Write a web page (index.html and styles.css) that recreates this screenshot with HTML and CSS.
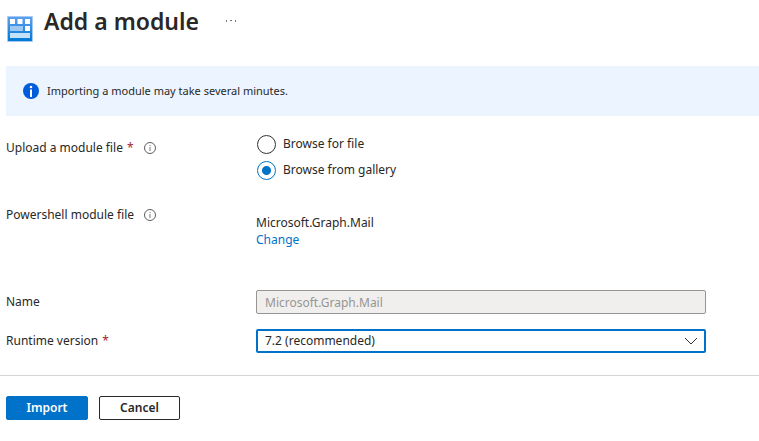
FILE: index.html
```html
<!DOCTYPE html>
<html lang="en">
<head>
<meta charset="utf-8">
<title>Add a module</title>
<link rel="stylesheet" href="styles.css">
</head>
<body>
<header class="header">
  <svg class="logo" viewBox="0 0 26 26" aria-hidden="true">
    <defs>
      <linearGradient id="tile" x1="0" y1="0" x2="0" y2="1">
        <stop offset="0" stop-color="#5ea0ef"/>
        <stop offset="1" stop-color="#0078d4"/>
      </linearGradient>
    </defs>
    <rect width="26" height="26" rx="1" fill="#a5cbf3"/>
    <rect x="1" y="1" width="24" height="24" fill="url(#tile)"/>
    <path fill="#fff" d="M3 3h5v5H3zM10.500 3h5v5h-5zM18 3h5v5h-5zM18 10h5v5h-5z"/>
    <path fill="#9cc8f2" d="M3 10h13v5H3z"/>
    <path fill="#c3e1f8" d="M3 17h20v5H3z"/>
  </svg>
  <h1 class="title">Add a module</h1>
  <button class="more" type="button" aria-label="More">
    <svg class="dots" viewBox="0 0 12 2" aria-hidden="true"><path fill="#797775" d="M1 0h1v2H1zM5 0h2v1H5zM10 0h1v2h-1z"/></svg>
  </button>
</header>

<div class="banner">
  <svg class="banner-icon" viewBox="0 0 16 16" aria-hidden="true">
    <circle cx="8" cy="8" r="8" fill="#015cda"/>
    <circle cx="8" cy="4" r="1.300" fill="#fff"/>
    <path fill="#fff" d="M7 6.500h2V14H7z"/>
  </svg>
  <span>Importing a module may take several minutes.</span>
</div>

<form class="form">
  <div class="row upload" role="radiogroup" aria-labelledby="upload-label">
    <div class="label">
      <span id="upload-label">Upload a module file <span class="required">*</span></span>
      <svg class="info" viewBox="0 0 12 12" aria-hidden="true"><circle cx="6" cy="6" r="5.500" fill="none" stroke="#605e5c"/><path fill="#797775" d="M5.500 3h1v1h-1zM5.500 5h1v4h-1z"/></svg>
    </div>
    <div class="field options">
      <label class="option"><input class="radio" type="radio" name="source">Browse for file</label>
      <label class="option"><input class="radio" type="radio" name="source" checked>Browse from gallery</label>
    </div>
  </div>

  <div class="row module">
    <div class="label">
      <span>Powershell module file</span>
      <svg class="info" viewBox="0 0 12 12" aria-hidden="true"><circle cx="6" cy="6" r="5.500" fill="none" stroke="#605e5c"/><path fill="#797775" d="M5.500 3h1v1h-1zM5.500 5h1v4h-1z"/></svg>
    </div>
    <div class="field module-value">
      <div>Microsoft.Graph.Mail</div>
      <a class="link" href="#">Change</a>
    </div>
  </div>

  <div class="row control-row">
    <label class="label" for="name">Name</label>
    <input class="field control" id="name" type="text" value="Microsoft.Graph.Mail" disabled>
  </div>

  <div class="row control-row">
    <label class="label" for="runtime"><span>Runtime version <span class="required">*</span></span></label>
    <div class="field select-box">
      <select class="control select" id="runtime"><option>7.2 (recommended)</option></select>
      <svg class="chevron" viewBox="0 0 14 8" aria-hidden="true"><path d="M1 1l6 6 6-6" fill="none" stroke="#323130"/></svg>
    </div>
  </div>

  <footer class="footer">
    <button class="button primary" type="button">Import</button>
    <button class="button" type="button">Cancel</button>
  </footer>
</form>
</body>
</html>
```
FILE: styles.css
```css
* {
  box-sizing: border-box;
}

body {
  margin: 0;
  background: #fff;
  color: #292827;
  font-family: "Noto Sans", "Open Sans", sans-serif;
  font-size: 12px;
  line-height: 18px;
}

.header {
  display: flex;
  align-items: flex-start;
  height: 66px;
  padding: 4px 7px;
}

.logo {
  width: 26px;
  height: 26px;
  margin-top: 12px;
}

.title {
  margin: 0 0 0 11px;
  font-size: 23px;
  font-weight: 600;
  line-height: 34px;
}

.more {
  display: flex;
  margin: 12px 0 0 22px;
  padding: 4px;
  border: 0;
  background: none;
}

.dots {
  width: 12px;
  height: 2px;
}

.banner {
  display: flex;
  align-items: center;
  gap: 8px;
  height: 50px;
  margin-left: 6px;
  padding: 0 17px;
  background: #ecf5ff;
  font-size: 11px;
}

.banner-icon {
  flex: none;
  width: 16px;
  height: 16px;
}

.row {
  display: grid;
  grid-template-columns: 250px minmax(0, 450px);
  padding: 0 6px;
}

.label {
  display: flex;
  align-items: center;
  align-self: start;
  gap: 10px;
}

.required {
  margin-left: 1px;
  color: #a4262c;
}

.info {
  width: 12px;
  height: 12px;
}

.upload {
  padding-top: 18px;
}

.upload .label {
  margin-top: 5px;
}

.options {
  display: grid;
  gap: 6px;
}

.option {
  display: flex;
  align-items: center;
  gap: 7px;
  height: 20px;
}

.radio {
  appearance: none;
  width: 19px;
  height: 19px;
  margin: 0 0 0 1px;
  border: 1px solid #323130;
  border-radius: 50%;
  background: #fff;
}

.radio:checked {
  border-color: #0072c9;
  background: radial-gradient(circle, #0072c9 4px, #fff 5px);
}

.module {
  padding-top: 26px;
}

.module-value {
  padding: 8px 0 42px;
  line-height: 17px;
}

.link {
  color: #0072c9;
  text-decoration: none;
}

.control-row {
  margin-bottom: 15px;
}

.control-row .label {
  align-self: center;
}

.control {
  width: 100%;
  height: 24px;
  margin: 0;
  padding: 0 8px;
  border: 1px solid #979593;
  border-radius: 2px;
  background: #f0efed;
  color: #979593;
  font: inherit;
}

.select-box {
  display: grid;
  align-items: center;
}

.select-box > * {
  grid-area: 1 / 1;
}

.select {
  appearance: none;
  padding: 0 7px;
  border: 2px solid #0072c9;
  background: #fff;
  color: #292827;
}

.chevron {
  justify-self: end;
  width: 14px;
  height: 8px;
  margin-right: 8px;
  pointer-events: none;
}

.footer {
  display: flex;
  gap: 11px;
  margin-top: 22px;
  padding: 20px 6px;
  border-top: 1px solid #d6d5d4;
}

.button {
  min-width: 81px;
  height: 24px;
  padding: 0 16px;
  border: 1px solid #292827;
  border-radius: 2px;
  background: #fff;
  color: #292827;
  font: inherit;
  font-weight: 600;
}

.primary {
  min-width: 82px;
  border-color: #0072c9;
  background: #0072c9;
  color: #fff;
}
```
